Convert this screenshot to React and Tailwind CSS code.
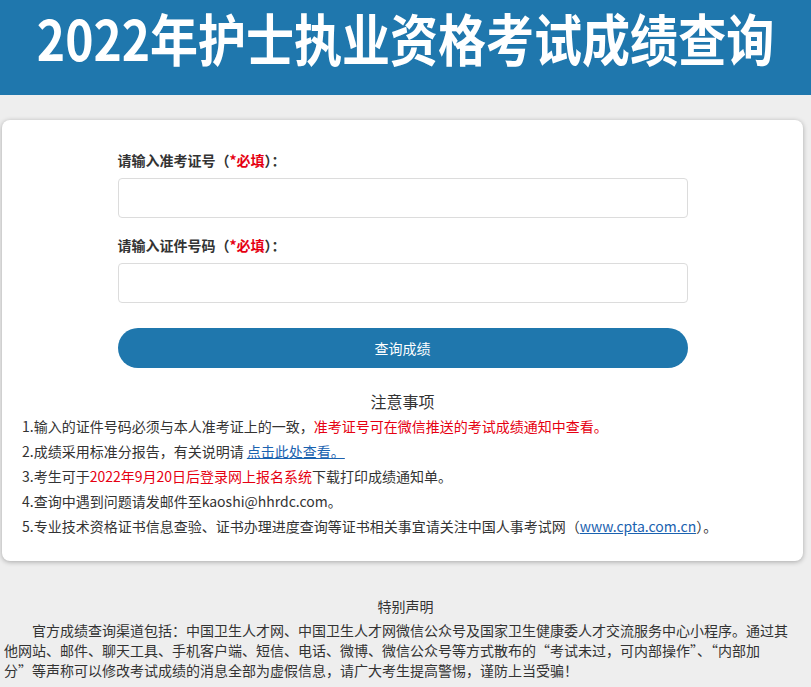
const font = { fontFamily: '"Microsoft YaHei", "Noto Sans CJK SC", "Noto Sans", sans-serif' }

function Field({ label }) {
  return (
    <div className="flex flex-col">
      <label className="h-[20px] text-[14px] font-bold leading-[20px] text-[#333]">
        {label}（<span className="text-[#e60012]">*必填</span>）：
      </label>
      <input
        type="text"
        className="mt-[8px] h-[40px] w-full rounded-[4px] border border-[#dcdcdc] bg-white px-3 outline-none"
      />
    </div>
  )
}

export default function App() {
  return (
    <div className="min-h-[687px] bg-[#eeeeee]" style={font}>
      <header className="h-[95px] bg-[#1f77ad] pt-[6px] text-center">
        <h1 className="inline-block origin-center scale-y-[1.15] whitespace-nowrap text-[48px] font-bold leading-[62px] text-white">
          2022年护士执业资格考试成绩查询
        </h1>
      </header>

      <main className="pt-[25px]">
        <section className="ml-[2px] w-[801px] rounded-[8px] bg-white px-[20px] pb-[22px] pt-[30px] shadow-[0_1px_5px_rgba(0,0,0,0.3)]">
          <div className="mx-auto flex w-[570px] flex-col">
            <Field label="请输入准考证号" />
            <div className="mt-[17px]">
              <Field label="请输入证件号码" />
            </div>
            <button className="mt-[25px] h-[40px] w-full rounded-full bg-[#1f77ad] text-[14px] text-white">
              查询成绩
            </button>
          </div>

          <h3 className="mt-[22px] text-center text-[16px] leading-[22px] text-[#333]">注意事项</h3>
          <ul className="mt-[2px] text-[14px] leading-[25px] text-[#333]">
            <li>
              1.输入的证件号码必须与本人准考证上的一致，
              <span className="text-[#e60012]">准考证号可在微信推送的考试成绩通知中查看。</span>
            </li>
            <li>
              2.成绩采用标准分报告，有关说明请{' '}
              <a href="#" className="text-[#1a62b0] underline">点击此处查看。</a>
            </li>
            <li>
              3.考生可于<span className="text-[#e60012]">2022年9月20日后登录网上报名系统</span>下载打印成绩通知单。
            </li>
            <li>4.查询中遇到问题请发邮件至kaoshi@hhrdc.com。</li>
            <li>
              5.专业技术资格证书信息查验、证书办理进度查询等证书相关事宜请关注中国人事考试网（
              <a href="#" className="text-[#1a62b0] underline">www.cpta.com.cn</a>）。
            </li>
          </ul>
        </section>

        <section className="pl-[4px] pr-[12px] pt-[34px] text-[14px] text-[#333]">
          <h4 className="pl-[8px] text-center leading-[22px]">特别声明</h4>
          <p className="mt-[3px] indent-[28px] leading-[20px] [font-feature-settings:'fwid']">
            官方成绩查询渠道包括：中国卫生人才网、中国卫生人才网微信公众号及国家卫生健康委人才交流服务中心小程序。通过其他网站、邮件、聊天工具、手机客户端、短信、电话、微博、微信公众号等方式散布的“考试未过，可内部操作”、“内部加分”等声称可以修改考试成绩的消息全部为虚假信息，请广大考生提高警惕，谨防上当受骗！
          </p>
        </section>
      </main>
    </div>
  )
}
